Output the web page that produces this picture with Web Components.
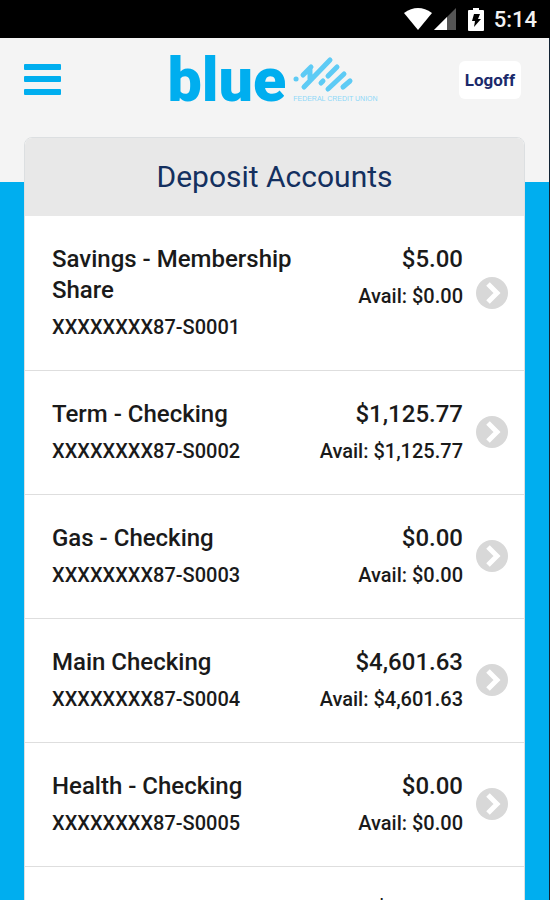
<!DOCTYPE html>
<html lang="en">
<head>
<meta charset="utf-8">
<meta name="viewport" content="width=device-width, initial-scale=1">
<title>Deposit Accounts</title>
<style>
    html {
        scrollbar-width: none;
        background-color: #00aeef;
    }

    body {
        margin: 0;
        font-family: Roboto, "Liberation Sans", sans-serif;
        color: #1a1a1a;
    }
</style>
</head>
<body>
<app-shell>
    <status-bar slot="status" time="5:14"></status-bar>
    <app-header slot="header"></app-header>
    <accounts-card heading="Deposit Accounts">
        <account-row name="Savings - Membership Share" number="XXXXXXXX87-S0001" balance="$5.00" available="$0.00"></account-row>
        <account-row name="Term - Checking" number="XXXXXXXX87-S0002" balance="$1,125.77" available="$1,125.77"></account-row>
        <account-row name="Gas - Checking" number="XXXXXXXX87-S0003" balance="$0.00" available="$0.00"></account-row>
        <account-row name="Main Checking" number="XXXXXXXX87-S0004" balance="$4,601.63" available="$4,601.63"></account-row>
        <account-row name="Health - Checking" number="XXXXXXXX87-S0005" balance="$0.00" available="$0.00"></account-row>
        <account-row balance="$100.00"></account-row>
    </accounts-card>
</app-shell>

<script>
// custom element AppShell
class AppShell extends HTMLElement {
    constructor() {
        super();
        this.attachShadow({ mode: 'open' });
        this.shadowRoot.innerHTML = `
            <style>
            :host {
                display: flex;
                flex-direction: column;
                box-sizing: border-box;
                height: 100vh;
                overflow: hidden;
            }

            /* the grey header band runs on behind the top of the card */
            main {
                flex: 1;
                min-height: 0;
                overflow-y: auto;
                scrollbar-width: none;
                padding: 0 24px;
                border-right: 1px solid #123;
                background: linear-gradient(#f4f4f4 45px, #00aeef 45px);
            }
            </style>

            <slot name="status"></slot>
            <slot name="header"></slot>
            <main><slot></slot></main>
        `;
    }
}

// custom element StatusBar
class StatusBar extends HTMLElement {
    constructor() {
        super();
        this.attachShadow({ mode: 'open' });
    }

    connectedCallback() {
        this.shadowRoot.innerHTML = `
            <style>
            :host {
                display: flex;
                align-items: center;
                justify-content: flex-end;
                height: 38px;
                padding-right: 13px;
                background-color: #000;
                color: #f2f2f2;
                font-size: 22px;
                font-weight: 500;
            }

            .wifi {
                margin-right: 2px;
            }

            .signal {
                margin-right: 12px;
            }

            .battery {
                margin-right: 10px;
            }
            </style>

            <svg class="wifi" width="28" height="22" viewBox="0 0 28 22" aria-hidden="true">
                <path d="M0 5Q14 -5 28 5L14 22Z" fill="#fff"/>
            </svg>
            <svg class="signal" width="22" height="22" viewBox="0 0 22 22" aria-hidden="true">
                <path d="M0 22L22 0V22Z" fill="#555"/>
                <path d="M0 22L13 9V22Z" fill="#fff"/>
            </svg>
            <svg class="battery" width="16" height="23" viewBox="0 0 16 23" aria-hidden="true">
                <path d="M5 0h6v2h4q1 0 1 1v19q0 1 -1 1H1q-1 0 -1 -1V3q0 -1 1 -1h4Z" fill="#fff"/>
                <path d="M6 6h6l-2 5h3l-7 8 1 -6H4Z" fill="#000"/>
            </svg>
            <span>${this.getAttribute('time')}</span>
        `;
    }
}

// custom element BrandLogo
class BrandLogo extends HTMLElement {
    constructor() {
        super();
        this.attachShadow({ mode: 'open' });
        this.shadowRoot.innerHTML = `
            <style>
            :host {
                display: flex;
                align-items: flex-end;
                color: #00aeef;
            }

            .word {
                font-size: 61px;
                font-weight: 900;
                line-height: 54px;
            }

            .side {
                display: flex;
                flex-direction: column;
                gap: 2px;
                padding-bottom: 4px;
                margin-left: 7px;
            }

            .tagline {
                font-family: "Liberation Sans", sans-serif;
                font-size: 7px;
                line-height: 8px;
                white-space: nowrap;
                color: #8ed8f8;
            }
            </style>

            <span class="word">blue</span>
            <span class="side">
                <svg width="62" height="38" viewBox="0 0 62 38" fill="none" stroke="#5ecbf5" stroke-width="5" stroke-linecap="round" aria-hidden="true">
                    <path d="M3 24h.1M10 20L18 12M11 32L37 5M17 14L17 24"/>
                    <path d="M28 28L30 26M35 21L44 12M35 34L51 19M50 32L57 26"/>
                </svg>
                <span class="tagline">FEDERAL CREDIT UNION</span>
            </span>
        `;
    }
}

// custom element AppHeader
class AppHeader extends HTMLElement {
    constructor() {
        super();
        this.attachShadow({ mode: 'open' });
        this.shadowRoot.innerHTML = `
            <style>
            :host {
                display: grid;
                grid-template-columns: 1fr auto 1fr;
                align-items: center;
                height: 83px;
                padding: 0 28px 16px 24px;
                border-right: 1px solid #123;
                background-color: #f4f4f4;
            }

            button {
                border: none;
                font-family: inherit;
                cursor: pointer;
            }

            .menu {
                justify-self: start;
                display: flex;
                padding: 0;
                background: none;
            }

            .logoff {
                justify-self: end;
                height: 38px;
                padding: 0 6px;
                border-radius: 6px;
                background-color: #fff;
                color: #1b2a6b;
                font-size: 17px;
                font-weight: 700;
            }
            </style>

            <button class="menu" type="button" aria-label="Menu">
                <svg width="37" height="31" viewBox="0 0 37 31" fill="#00aeef" aria-hidden="true">
                    <rect x="0" y="0" width="37" height="6" rx="1"/>
                    <rect x="0" y="12" width="37" height="6" rx="1"/>
                    <rect x="0" y="25" width="37" height="6" rx="1"/>
                </svg>
            </button>
            <brand-logo></brand-logo>
            <button class="logoff" type="button">Logoff</button>
        `;
    }
}

// custom element AccountsCard
class AccountsCard extends HTMLElement {
    constructor() {
        super();
        this.attachShadow({ mode: 'open' });
    }

    connectedCallback() {
        this.shadowRoot.innerHTML = `
            <style>
            :host {
                display: block;
                border: 1px solid #dcdfe1;
                border-radius: 8px 8px 0 0;
                overflow: hidden;
                background-color: #fff;
            }

            h1 {
                margin: 0;
                padding: 22px 0 23px 0;
                background-color: #e8e8e8;
                color: #14305f;
                text-align: center;
                font-size: 30px;
                line-height: 33px;
                font-weight: 400;
            }
            </style>

            <h1>${this.getAttribute('heading')}</h1>
            <slot></slot>
        `;
    }
}

// custom element AccountRow
class AccountRow extends HTMLElement {
    constructor() {
        super();
        this.attachShadow({ mode: 'open' });
    }

    connectedCallback() {
        const available = this.getAttribute('available');

        this.shadowRoot.innerHTML = `
            <style>
            :host {
                display: block;
                border-bottom: 1px solid #dedede;
            }

            a {
                display: flex;
                align-items: center;
                padding: 28px 15px 27px 27px;
                color: inherit;
                text-decoration: none;
                font-weight: 500;
                line-height: 31px;
            }

            .details {
                flex: 1;
                display: flex;
                justify-content: space-between;
                gap: 16px;
            }

            .col {
                display: flex;
                flex-direction: column;
                gap: 6px;
            }

            .amounts {
                flex-shrink: 0;
                text-align: right;
            }

            .large {
                font-size: 24px;
            }

            /* keeps its line when a row has no second line of text */
            .small {
                min-height: 31px;
                font-size: 20px;
            }

            svg {
                flex-shrink: 0;
                margin-left: 12px;
            }
            </style>

            <a href="#">
                <span class="details">
                    <span class="col">
                        <span class="large">${this.getAttribute('name') || ''}</span>
                        <span class="small">${this.getAttribute('number') || ''}</span>
                    </span>
                    <span class="col amounts">
                        <span class="large">${this.getAttribute('balance')}</span>
                        <span class="small">${available ? `Avail: ${available}` : ''}</span>
                    </span>
                </span>
                <svg width="34" height="34" viewBox="0 0 34 34" aria-hidden="true">
                    <circle cx="17" cy="16" r="16" fill="#d8d8d8"/>
                    <path d="M13 7L22 16L13 25" fill="none" stroke="#fff" stroke-width="5"/>
                </svg>
            </a>
        `;
    }
}

customElements.define("app-shell", AppShell);
customElements.define("status-bar", StatusBar);
customElements.define("brand-logo", BrandLogo);
customElements.define("app-header", AppHeader);
customElements.define("accounts-card", AccountsCard);
customElements.define("account-row", AccountRow);
</script>
</body>
</html>
